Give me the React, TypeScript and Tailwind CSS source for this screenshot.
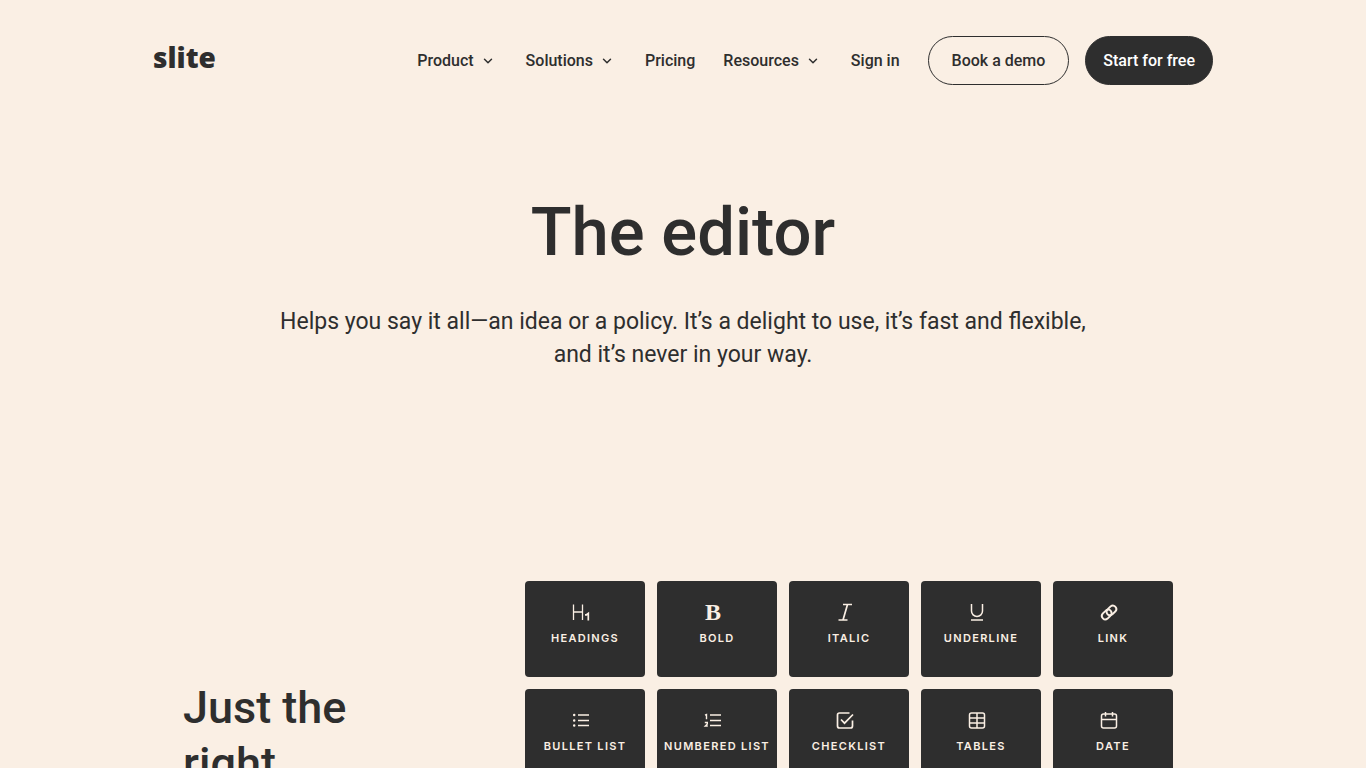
import type { ReactNode } from 'react'
import { ChevronDown } from 'lucide-react'

const links = [
  { label: 'Product', menu: true },
  { label: 'Solutions', menu: true },
  { label: 'Pricing', menu: false },
  { label: 'Resources', menu: true },
  { label: 'Sign in', menu: false }
]

const tools: { label: string; icon: ReactNode }[] = [
  {
    label: 'Headings',
    icon: (
      <>
        <path strokeWidth="1.3" d="M4.5 4.5v15.5M13.5 4.5v15.5M4.5 12h9" />
        <path strokeWidth="1.7" d="M16 14.8h1.5l1.8-1.3v7" />
      </>
    )
  },
  {
    label: 'Bold',
    icon: (
      <text
        x="12"
        y="20"
        textAnchor="middle"
        fill="currentColor"
        stroke="none"
        className="font-['Liberation_Serif',serif] text-2xl font-bold"
      >
        B
      </text>
    )
  },
  {
    label: 'Italic',
    icon: <path strokeWidth="1.7" d="M10 4.5h9M5.5 20h9M14.5 4.5l-4.5 15.5" />
  },
  {
    label: 'Underline',
    icon: <path d="M6.5 4v7a5.5 5.5 0 0 0 11 0v-7M6 20h12" />
  },
  {
    label: 'Link',
    icon: (
      <g transform="translate(2.6 3) scale(0.79)" strokeWidth="2.4" strokeLinecap="round">
        <path d="M9.5 13.5a4.4 4.4 0 0 0 7 .6l3.6-3.6a4.4 4.4 0 0 0-6.2-6.2l-3.6 3.6a4.4 4.4 0 0 0-.8 5.6" />
        <path d="M14.5 10.5a4.4 4.4 0 0 0-7-.6l-3.6 3.6a4.4 4.4 0 0 0 6.2 6.2l3.6-3.6a4.4 4.4 0 0 0 .8-5.6" />
      </g>
    )
  },
  {
    label: 'Bullet list',
    icon: (
      <>
        <path strokeWidth="1.7" d="M9 7h11M9 12.5h11M9 17.5h11" />
        <path strokeWidth="2.5" strokeLinecap="round" d="M5.2 7h.01M5.2 12.5h.01M5.2 17.5h.01" />
      </>
    )
  },
  {
    label: 'Numbered list',
    icon: (
      <>
        <path strokeWidth="1.7" d="M9 7h11M9 12.5h11M9 17.5h11" />
        <path strokeWidth="1.4" d="M4 7.2l1.5-.7v4.7M3.8 14.5h2.5v1.5l-2 2h2.5" />
      </>
    )
  },
  {
    label: 'Checklist',
    icon: (
      <path
        strokeWidth="1.7"
        d="M19.5 12.5v5.5a2 2 0 0 1-2 2H6.5a2 2 0 0 1-2-2V7a2 2 0 0 1 2-2h10M8 11.5l3.5 3.7L20 6.5"
      />
    )
  },
  {
    label: 'Tables',
    icon: (
      <>
        <rect x="4.5" y="5" width="15" height="15" rx="2" />
        <path d="M4.5 10h15M4.5 15h15M12 5v15" />
      </>
    )
  },
  {
    label: 'Date',
    icon: (
      <>
        <rect x="4.5" y="6" width="15" height="14" rx="2" />
        <path d="M4.5 11.5h15M8.5 4v4.5M15.5 4v4.5" />
      </>
    )
  }
]

function Header() {
  return (
    <header className="mx-auto flex w-full max-w-[1060px] items-center justify-between pt-9">
      <a href="#" className="pb-2 font-['Open_Sans',sans-serif] text-[28px] leading-10 font-extrabold">
        slite
      </a>
      <nav className="flex items-center gap-7 text-base font-medium">
        {links.map(({ label, menu }) =>
          menu ? (
            <button key={label} type="button" className="flex items-center gap-1 leading-[23px] font-medium">
              {label}
              <span className="flex w-5 justify-center">
                <ChevronDown size={14} strokeWidth={2.5} />
              </span>
            </button>
          ) : (
            <a key={label} href="#" className="leading-[23px]">
              {label}
            </a>
          )
        )}
        <div className="flex gap-4">
          <a href="#" className="rounded-full border border-[#2e2e2e] px-[23px] py-3 leading-[23px]">
            Book a demo
          </a>
          <a
            href="#"
            className="rounded-full border border-[#2e2e2e] bg-[#2e2e2e] px-[17px] py-3 leading-[23px] text-white"
          >
            Start for free
          </a>
        </div>
      </nav>
    </header>
  )
}

export default function App() {
  return (
    <div className="min-h-screen bg-[#faefe4] font-['Roboto',sans-serif] text-[#2e2e2e]">
      <Header />
      <main>
        <section className="mx-auto flex max-w-[820px] flex-col items-center gap-[33px] pt-[107px] text-center">
          <h1 className="text-[67px] leading-20 font-medium">The editor</h1>
          <p className="text-[23px] leading-[33px]">
            Helps you say it all—an idea or a policy. It’s a delight to use, it’s fast and flexible, and it’s never in
            your way.
          </p>
        </section>
        <section className="mx-auto flex max-w-[1000px] justify-between pt-[210px] pr-[10px]">
          <h2 className="w-[180px] pt-[99px] text-[45px] leading-14 font-medium">Just the right</h2>
          <ul className="grid grid-cols-5 content-start gap-3">
            {tools.map(({ label, icon }) => (
              <li
                key={label}
                className="flex h-24 w-[120px] flex-col items-center gap-1.5 rounded bg-[#2e2e2e] pt-[19px] text-[#faefe4]"
              >
                <svg
                  viewBox="0 0 24 24"
                  fill="none"
                  stroke="currentColor"
                  strokeWidth="1.5"
                  className="mr-2 size-6"
                  aria-hidden="true"
                >
                  {icon}
                </svg>
                <span className="font-['Inter',sans-serif] text-[11px] leading-4 font-semibold tracking-[0.12em] whitespace-nowrap uppercase">
                  {label}
                </span>
              </li>
            ))}
          </ul>
        </section>
      </main>
    </div>
  )
}
